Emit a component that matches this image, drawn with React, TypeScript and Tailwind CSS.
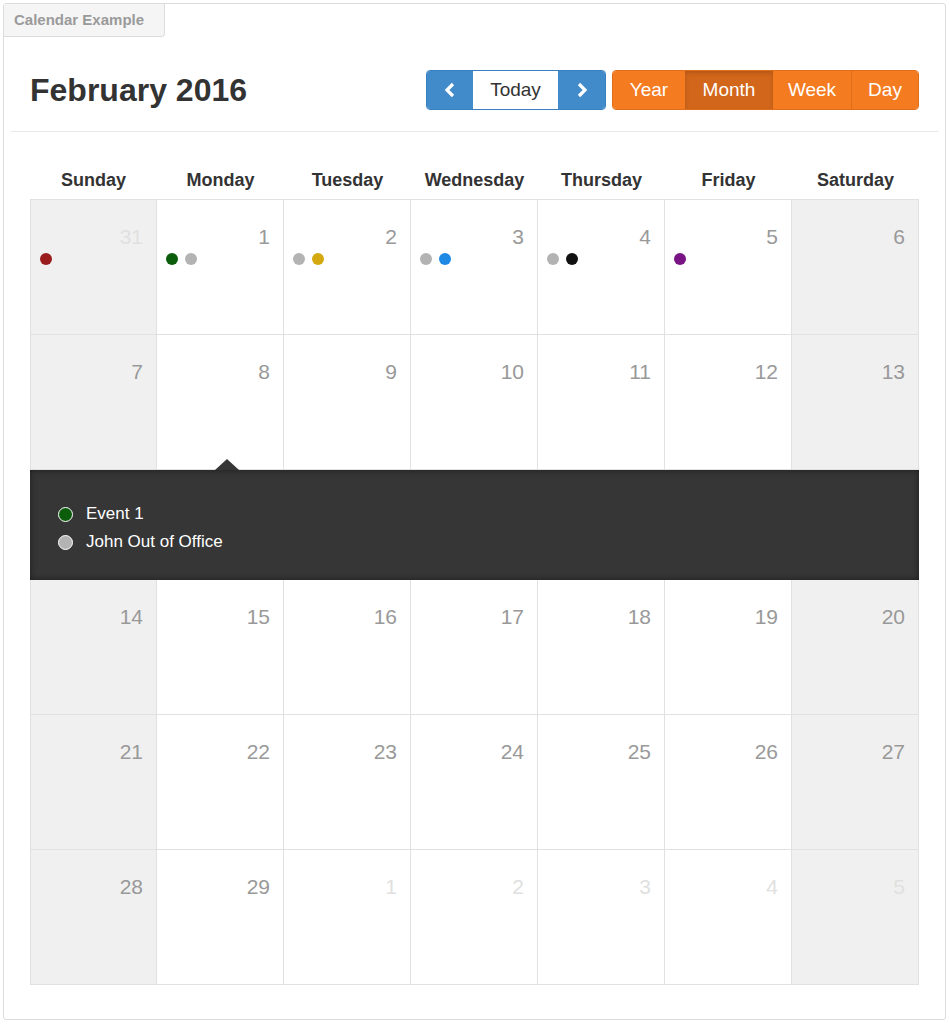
import React from 'react';

const F = { fontFamily: '"Liberation Sans", Arial, sans-serif' };

type Cell = { n: number; faded?: boolean; weekend?: boolean; dots?: string[] };

const rows: Cell[][] = [
  [{ n: 31, faded: true, weekend: true }, { n: 1 }, { n: 2 }, { n: 3 }, { n: 4 }, { n: 5 }, { n: 6, weekend: true }],
  [
    { n: 7, weekend: true, dots: ['#9a1c1c'] },
    { n: 8, dots: ['#0b5d0b', '#b3b3b3'] },
    { n: 9, dots: ['#b3b3b3', '#d4a90f'] },
    { n: 10, dots: ['#b3b3b3', '#1e88e5'] },
    { n: 11, dots: ['#b3b3b3', '#111111'] },
    { n: 12, dots: ['#7a1485'] },
    { n: 13, weekend: true },
  ],
  [{ n: 14, weekend: true }, { n: 15 }, { n: 16 }, { n: 17 }, { n: 18 }, { n: 19 }, { n: 20, weekend: true }],
  [{ n: 21, weekend: true }, { n: 22 }, { n: 23 }, { n: 24 }, { n: 25 }, { n: 26 }, { n: 27, weekend: true }],
  [
    { n: 28, weekend: true }, { n: 29 }, { n: 1, faded: true }, { n: 2, faded: true },
    { n: 3, faded: true }, { n: 4, faded: true }, { n: 5, faded: true, weekend: true },
  ],
];

const days = ['Sunday', 'Monday', 'Tuesday', 'Wednesday', 'Thursday', 'Friday', 'Saturday'];

function Row({ cells }: { cells: Cell[] }) {
  return (
    <div className="grid grid-cols-7 h-[135px]">
      {cells.map((c, i) => (
        <div
          key={i}
          className={`relative border-r border-b border-[#e1e1e1] ${i === 0 ? 'border-l' : ''} ${c.weekend ? 'bg-[#f0f0f0]' : 'bg-white'}`}
        >
          <div className={`text-right pr-[13px] pt-[24px] text-[21px] leading-[26px] ${c.faded ? 'text-[#e0e0e0]' : 'text-[#999]'}`}>
            {c.n}
          </div>
          {c.dots && (
            <div className="absolute left-[9px] top-[253px] -mt-[200px] flex gap-[7px]" style={{ top: 118 }}>
              {c.dots.map((d, j) => (
                <span key={j} className="w-[12px] h-[12px] rounded-full" style={{ background: d }} />
              ))}
            </div>
          )}
        </div>
      ))}
    </div>
  );
}

export default function App() {
  return (
    <div className="bg-white w-[949px] h-[1024px] p-[3px]" style={F}>
      <div className="relative border border-[#dcdcdc] rounded-[3px] h-[1017px]">
        <div className="absolute left-0 top-0 w-[161px] h-[33px] bg-[#f5f5f5] border-r border-b border-[#dcdcdc] rounded-br-[4px] text-[#9a9a9a] font-bold text-[15px] flex items-center pl-[10px]">
          Calendar Example
        </div>
        <div className="pt-[66px] px-[7px]">
          <div className="flex items-center justify-between pl-[19px] pr-[19px] h-[40px]">
            <h1 className="text-[32px] font-bold text-[#333]">February 2016</h1>
            <div className="flex gap-[6px]">
              <div className="flex h-[40px] rounded-[4px] overflow-hidden border border-[#3a80c0]">
                <button className="w-[46px] bg-[#428bca] text-white flex items-center justify-center">
                  <svg width="14" height="16" viewBox="0 0 14 16"><path d="M10 2 L4 8 L10 14" stroke="white" strokeWidth="3.2" fill="none" /></svg>
                </button>
                <button className="w-[85px] bg-white text-[#333] text-[19px]">Today</button>
                <button className="w-[47px] bg-[#428bca] text-white flex items-center justify-center">
                  <svg width="14" height="16" viewBox="0 0 14 16"><path d="M4 2 L10 8 L4 14" stroke="white" strokeWidth="3.2" fill="none" /></svg>
                </button>
              </div>
              <div className="flex h-[40px] rounded-[4px] overflow-hidden border border-[#e06d17] text-white text-[19px]">
                <button className="w-[72px] bg-[#f47b20]">Year</button>
                <button className="w-[88px] bg-[#d2661b] shadow-[inset_0_2px_4px_rgba(0,0,0,0.15)]">Month</button>
                <button className="w-[79px] bg-[#f47b20] border-r border-[#e06d17]">Week</button>
                <button className="w-[66px] bg-[#f47b20]">Day</button>
              </div>
            </div>
          </div>
          <div className="border-t border-[#e8e8e8] mt-[21px]" />
          <div className="px-[19px] pt-[35px]">
            <div className="grid grid-cols-7 h-[33px] text-[18px] font-bold text-[#333] text-center border-b border-[#e1e1e1]">
              {days.map((d) => (
                <div key={d}>{d}</div>
              ))}
            </div>
            <Row cells={rows[0]} />
            <Row cells={rows[1]} />
            <div className="relative h-[110px] bg-[#363636] shadow-[inset_0_0_6px_rgba(0,0,0,0.5)] pl-[28px] pt-[30px] text-white text-[17px]">
              <div className="absolute -top-[11px] left-[185px] w-0 h-0 border-l-[12px] border-r-[12px] border-b-[11px] border-l-transparent border-r-transparent border-b-[#363636]" />
              <div className="flex items-center gap-[13px] h-[28px]">
                <span className="w-[15px] h-[15px] rounded-full bg-[#0b5d0b] border-[1.5px] border-white" />
                Event 1
              </div>
              <div className="flex items-center gap-[13px] h-[28px]">
                <span className="w-[15px] h-[15px] rounded-full bg-[#b3b3b3] border-[1.5px] border-white" />
                John Out of Office
              </div>
            </div>
            <Row cells={rows[2]} />
            <Row cells={rows[3]} />
            <Row cells={rows[4]} />
          </div>
        </div>
      </div>
    </div>
  );
}
